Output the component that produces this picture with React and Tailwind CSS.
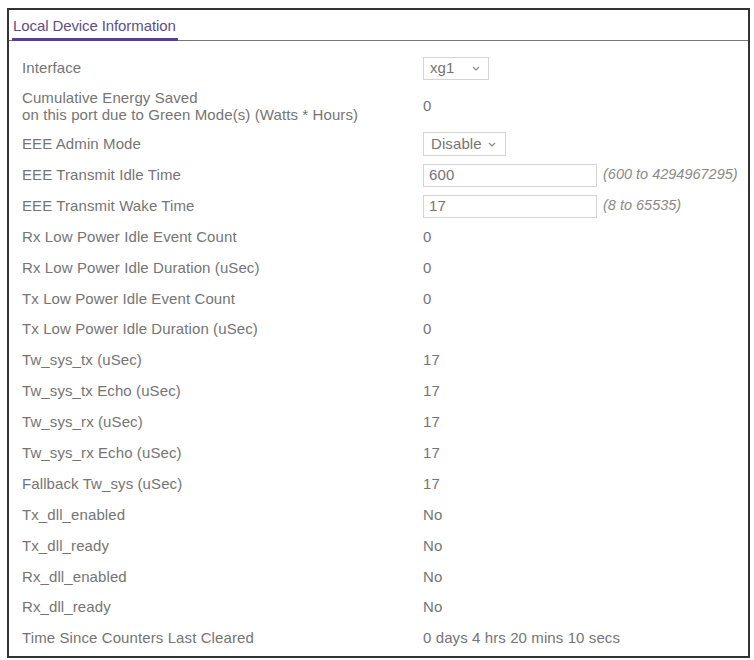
import React from "react";

// static rows under the two editable fields
const rows = [
  ["Rx Low Power Idle Event Count", "0"],
  ["Rx Low Power Idle Duration (uSec)", "0"],
  ["Tx Low Power Idle Event Count", "0"],
  ["Tx Low Power Idle Duration (uSec)", "0"],
  ["Tw_sys_tx (uSec)", "17"],
  ["Tw_sys_tx Echo (uSec)", "17"],
  ["Tw_sys_rx (uSec)", "17"],
  ["Tw_sys_rx Echo (uSec)", "17"],
  ["Fallback Tw_sys (uSec)", "17"],
  ["Tx_dll_enabled", "No"],
  ["Tx_dll_ready", "No"],
  ["Rx_dll_enabled", "No"],
  ["Rx_dll_ready", "No"],
  ["Time Since Counters Last Cleared", "0 days 4 hrs 20 mins 10 secs"],
];

function Chevron() {
  return (
    <svg width="8" height="5" viewBox="0 0 8 5" className="text-[#888]">
      <path d="M1 1 L4 4 L7 1" fill="none" stroke="currentColor" strokeWidth="1.2" />
    </svg>
  );
}

function Row({ label, children }) {
  return (
    <div className="flex items-center h-[30.9px]">
      <div className="w-[401px] shrink-0">{label}</div>
      <div className="flex items-center">{children}</div>
    </div>
  );
}

export default function App() {
  return (
    <div className="w-[754px] h-[660px] bg-white pt-[8px] pl-[7px] font-['Liberation_Sans',Arial,sans-serif] text-[15px] tracking-[0.1px] text-[#757575]">
      <div className="w-[743px] h-[650px] border-2 border-[#333] flex flex-col">
        {/* tab header */}
        <div className="h-[31px] flex items-end border-b border-[#777]">
          <div className="ml-[3px] w-[166px] h-full flex items-center pl-[1px] text-[#5e4f86] text-[15px] tracking-[-0.1px] border-b-[3px] border-[#5b3d91] -mb-[1px] pt-[3px] whitespace-nowrap">
            Local Device Information
          </div>
        </div>

        <div className="pl-[13px] pt-[12px]">
          <Row label="Interface">
            <div className="w-[66px] h-[23px] border border-[#d4d4d4] flex items-center justify-between pl-[6px] pr-[8px]">
              <span>xg1</span>
              <Chevron />
            </div>
          </Row>

          <div className="flex items-center h-[45px]">
            <div className="w-[401px] shrink-0 leading-[17px]">
              Cumulative Energy Saved
              <br />
              on this port due to Green Mode(s) (Watts * Hours)
            </div>
            <div>0</div>
          </div>

          <Row label="EEE Admin Mode">
            <div className="w-[83px] h-[24px] border border-[#d4d4d4] flex items-center justify-between pl-[7px] pr-[9px]">
              <span>Disable</span>
              <Chevron />
            </div>
          </Row>

          <Row label="EEE Transmit Idle Time">
            <div className="w-[174px] h-[23px] border border-[#d4d4d4] flex items-center pl-[5px]">600</div>
            <span className="ml-[6px] italic text-[14.5px] text-[#8a8a8a] tracking-normal">(600 to 4294967295)</span>
          </Row>

          <Row label="EEE Transmit Wake Time">
            <div className="w-[174px] h-[23px] border border-[#d4d4d4] flex items-center pl-[5px]">17</div>
            <span className="ml-[6px] italic text-[14.5px] text-[#8a8a8a] tracking-normal">(8 to 65535)</span>
          </Row>

          {rows.map(([label, value]) => (
            <Row key={label} label={label}>
              {value}
            </Row>
          ))}
        </div>
      </div>
    </div>
  );
}
